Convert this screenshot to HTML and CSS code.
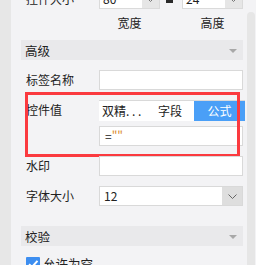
FILE: index.html
```html
<!DOCTYPE html>
<html lang="zh-CN">
<head>
    <meta charset="UTF-8">
    <title>控件属性</title>
    <link rel="stylesheet" href="styles.css">
</head>
<body>
    <div class="app">
        <div class="rail"></div>
        <div class="panel">
            <div class="content">
                <!-- 控件大小 -->
                <div class="row size-row">
                    <span class="label">控件大小</span>
                    <div class="num-box">
                        <span class="num-text">80</span>
                        <span class="num-arrow">
                            <svg width="9" height="5" viewBox="0 0 9 5"><path d="M0.5 0.5 L4.5 4.5 L8.5 0.5" fill="none" stroke="#777" stroke-width="1"/></svg>
                        </span>
                    </div>
                    <span class="lock"></span>
                    <div class="num-box">
                        <span class="num-text">24</span>
                        <span class="num-arrow">
                            <svg width="9" height="5" viewBox="0 0 9 5"><path d="M0.5 0.5 L4.5 4.5 L8.5 0.5" fill="none" stroke="#777" stroke-width="1"/></svg>
                        </span>
                    </div>
                </div>
                <div class="row sub-row">
                    <span class="label"></span>
                    <span class="sub">宽度</span>
                    <span class="sub-gap"></span>
                    <span class="sub">高度</span>
                </div>

                <div class="section first">
                    <span>高级</span>
                    <span class="tri"></span>
                </div>

                <div class="row">
                    <span class="label">标签名称</span>
                    <div class="field"></div>
                </div>

                <div class="row value-row">
                    <span class="label top">控件值</span>
                    <div class="value-col">
                        <div class="tabs">
                            <span class="tab ellipsis">双精. . .</span>
                            <span class="tab">字段</span>
                            <span class="tab active">公式</span>
                        </div>
                        <div class="field formula">=<span class="quote">""</span></div>
                    </div>
                    <div class="mark"></div>
                </div>

                <div class="row">
                    <span class="label">水印</span>
                    <div class="field"></div>
                </div>

                <div class="row">
                    <span class="label">字体大小</span>
                    <div class="field select">
                        <span class="select-text">12</span>
                        <span class="select-arrow">
                            <svg width="9" height="5" viewBox="0 0 9 5"><path d="M0.5 0.5 L4.5 4.5 L8.5 0.5" fill="none" stroke="#666" stroke-width="1"/></svg>
                        </span>
                    </div>
                </div>

                <div class="section second">
                    <span>校验</span>
                    <span class="tri"></span>
                </div>

                <div class="row check-row">
                    <span class="check">
                        <svg width="14" height="14" viewBox="0 0 14 14"><path d="M3 7.2 L6 10 L11.5 3.8" fill="none" stroke="#fff" stroke-width="2"/></svg>
                    </span>
                    <span class="check-text">允许为空</span>
                </div>
            </div>
            <div class="scroll"><div class="thumb"></div></div>
        </div>
    </div>
</body>
</html>
```

FILE: styles.css
```css
body {
    margin: 0;
    font-family: "Noto Sans CJK SC", "Noto Sans", sans-serif;
    font-size: 12px;
    color: #222;
    background: #f3f3f5;
}

.app {
    display: flex;
    width: 256px;
    height: 265px;
    overflow: hidden;
}

.rail {
    width: 11px;
    flex-shrink: 0;
    background: #e7e7e7;
}

.panel {
    flex: 1;
    display: flex;
    background: #f3f3f5;
}

.content {
    width: 222px;
    padding-left: 10px;
    padding-right: 4px;
}

.scroll {
    width: 9px;
    padding-top: 12px;
}

.thumb {
    width: 8px;
    height: 260px;
    background: #e6e6e6;
    border-radius: 4px 4px 0 0;
}

.row {
    display: flex;
    align-items: center;
    height: 20px;
    margin-top: 10px;
    padding-left: 5px;
    position: relative;
}

.label {
    width: 73px;
    flex-shrink: 0;
    line-height: 20px;
    white-space: nowrap;
}

.label.top {
    align-self: flex-start;
}

/* size row */
.size-row {
    margin-top: -11px;
}

.num-box {
    display: flex;
    width: 61px;
    height: 20px;
    box-sizing: border-box;
    background: #fff;
    border: 1px solid #dadada;
}

.num-text {
    flex: 1;
    padding-left: 3px;
    line-height: 18px;
}

.num-arrow {
    width: 17px;
    display: flex;
    align-items: center;
    justify-content: center;
    background: #e6e6e6;
}

.lock {
    width: 7px;
    height: 8px;
    margin: 0 9px 0 6px;
    background: #2a2a2a;
}

.sub-row {
    margin-top: 3px;
}

.sub {
    width: 61px;
    text-align: center;
}

.sub-gap {
    width: 22px;
}

/* section headers */
.section {
    display: flex;
    align-items: center;
    justify-content: space-between;
    height: 20px;
    padding: 0 6px 0 4px;
    background: #e9e9eb;
    font-size: 12.5px;
}

.section.first {
    margin-top: 8px;
}

.section.second {
    margin-top: 20px;
}

.tri {
    width: 0;
    height: 0;
    border-left: 4px solid transparent;
    border-right: 4px solid transparent;
    border-top: 4px solid #a8a8a8;
    margin-top: 2px;
}

/* fields */
.field {
    flex: 1;
    height: 20px;
    box-sizing: border-box;
    background: #fff;
    border: 1px solid #d9d9d9;
}

.value-row {
    height: auto;
    align-items: flex-start;
}

.value-col {
    flex: 1;
    display: flex;
    flex-direction: column;
    gap: 5px;
}

.tabs {
    display: flex;
    height: 21px;
    box-sizing: border-box;
    background: #fff;
    border-top: 1px solid #d9d9d9;
    margin-right: -2px;
}

.tab {
    width: 48px;
    text-align: center;
    line-height: 20px;
    white-space: nowrap;
}

.tab.ellipsis {
    width: 47px;
    text-align: left;
    padding-left: 3px;
    box-sizing: border-box;
}

.tab.active {
    flex: 1;
    background: #4a9ff7;
    color: #fff;
}

.formula {
    padding-left: 5px;
    line-height: 18px;
    flex: none;
}

.quote {
    color: #d98a2c;
}

.mark {
    position: absolute;
    left: 4px;
    top: -8px;
    width: 209px;
    height: 59px;
    border: 3px solid #fb3a3f;
}

.select {
    display: flex;
}

.select-text {
    flex: 1;
    padding-left: 4px;
    line-height: 18px;
}

.select-arrow {
    width: 20px;
    display: flex;
    align-items: center;
    justify-content: center;
    background: #dedede;
}

/* checkbox */
.check-row {
    margin-top: 11px;
    align-items: flex-start;
}

.check {
    width: 14px;
    height: 14px;
    background: #3d8ef0;
    border-radius: 1px;
    display: flex;
}

.check-text {
    margin-left: 3px;
    font-size: 12.5px;
    line-height: 14px;
}
```
